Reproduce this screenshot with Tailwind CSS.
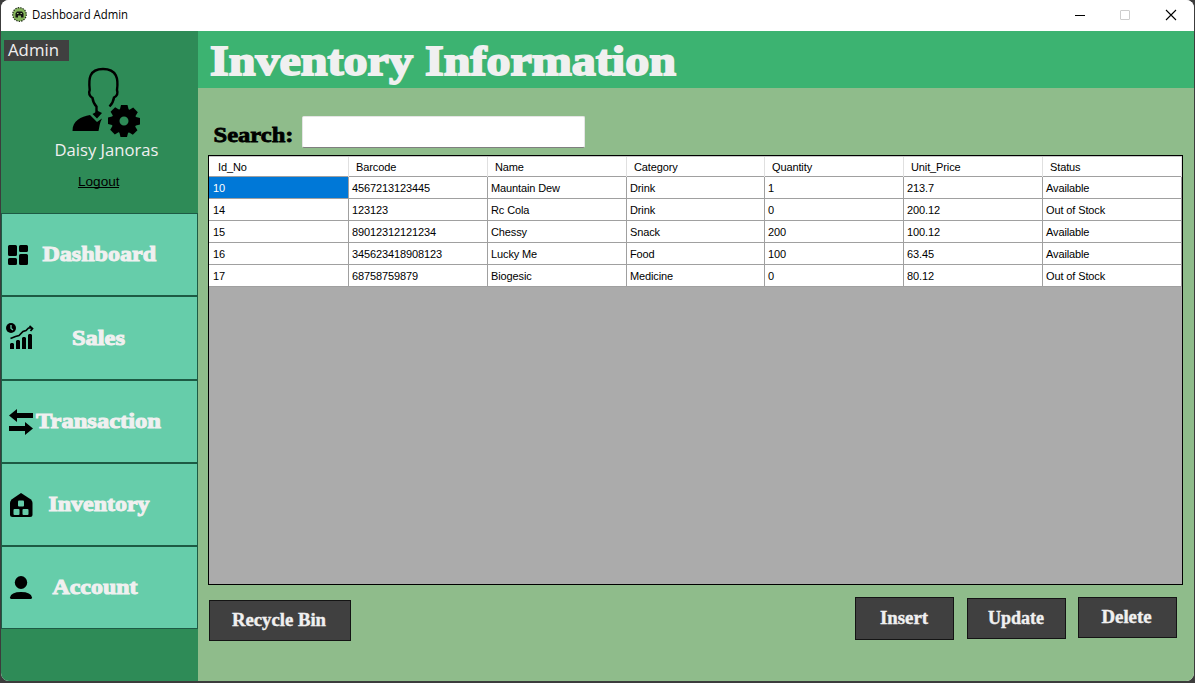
<!DOCTYPE html>
<html lang="en">
<head>
<meta charset="utf-8">
<title>Dashboard Admin</title>
<script src="https://cdn.jsdelivr.net/npm/@tailwindcss/browser@4"></script>
</head>
<body class="h-[683px] w-[1195px] overflow-hidden bg-[#3c3c3c] pr-px pb-[2px] pl-px font-['Liberation_Sans',sans-serif]">
<div class="flex h-[681px] w-[1193px] flex-col overflow-hidden rounded-lg bg-white">
  <header class="flex h-[31px] shrink-0 items-center bg-white pb-[2px] pl-[11px]">
    <svg class="mr-[5px] h-[15px] w-[15px]" viewBox="0 0 15 15"><circle cx="7.5" cy="7.5" r="6.8" fill="#86b45c" stroke="#1c2b14" stroke-width="1.2" stroke-dasharray="1.5 1"/><path d="M3.500 10.500V6.500L5 4.500H10L11.500 6.500V10.500H9V8.500H6V10.500Z" fill="#111"/><path d="M5 6.500h1.500M8.500 6.500h1.500" stroke="#9fc777"/></svg>
    <svg class="h-[20px] w-[100px]" viewBox="0 0 100 20"><text x="0" y="14" font-size="12" textLength="96" lengthAdjust="spacingAndGlyphs" class="font-['Open_Sans',sans-serif]">Dashboard Admin</text></svg>
    <div class="ml-auto flex items-center">
      <svg class="h-[14px] w-[12px]" viewBox="0 0 12 14"><path d="M1 7.5h10" stroke="#000"/></svg>
      <svg class="ml-[33px] h-[14px] w-[12px]" viewBox="0 0 12 14"><rect x="1.5" y="2.5" width="9" height="9" rx=".5" fill="none" stroke="#cdcdcd"/></svg>
      <svg class="mr-[17px] ml-[34px] h-[14px] w-[12px]" viewBox="0 0 12 14"><path d="M1 2l10 10M11 2L1 12" stroke="#000" stroke-width="1.1"/></svg>
    </div>
  </header>
  <div class="flex min-h-0 flex-1">
    <aside class="flex w-[197px] shrink-0 flex-col bg-[#2e8b57]">
      <section class="h-[182px] pt-[9px]">
        <div class="ml-[3px] h-[21px] w-[65px] bg-[#404040]"><svg class="h-[21px] w-[65px] overflow-visible" viewBox="0 0 65 21"><text x="4" y="16" font-size="16.500" textLength="51" lengthAdjust="spacingAndGlyphs" fill="#f0f0f0" class="font-['Open_Sans',sans-serif]">Admin</text></svg></div>
        <svg class="mt-[6px] ml-[70px] h-[72px] w-[72px]" viewBox="71 67 72 72">
          <path d="M109.500 106.500C112 104 113.500 101 114 97.500C117 96 118 93 117 90C118.500 79 117 69 103 69C89 69 88.500 79 89.700 90C88.500 93 89.500 96 92.500 98C93 102 94 104 96.500 106.500L96.500 113" fill="none" stroke="#000" stroke-width="2.400"/>
          <path d="M96 109l2 2 4 2-5 5.500-4.500-4.500 3.500-2zM72.500 131C72.500 120 81 117 90 115L97 122 102 118.500C99.500 123 99.500 127 98.500 131Z" fill="#000"/>
          <circle cx="124" cy="121" r="8.500" fill="none" stroke="#000" stroke-width="8"/>
          <g fill="#000"><path id="tooth" d="M119.500 111l1.500-6h6.500l1.500 6z"/><use href="#tooth" transform="rotate(45 124 121)"/><use href="#tooth" transform="rotate(90 124 121)"/><use href="#tooth" transform="rotate(135 124 121)"/><use href="#tooth" transform="rotate(180 124 121)"/><use href="#tooth" transform="rotate(225 124 121)"/><use href="#tooth" transform="rotate(270 124 121)"/><use href="#tooth" transform="rotate(315 124 121)"/></g>
        </svg>
        <svg class="ml-[53px] block h-[24px] w-[108px]" viewBox="54 139 108 24"><text x="54.500" y="156" font-size="16.500" textLength="104" lengthAdjust="spacingAndGlyphs" fill="#f0f0f0" class="font-['Open_Sans',sans-serif]">Daisy Janoras</text></svg>
        <svg class="mt-[9px] ml-[77px] block h-[18px] w-[42px]" viewBox="78 172 42 18"><text x="78" y="186" font-size="13.500" textLength="41.500" lengthAdjust="spacingAndGlyphs">Logout</text><path d="M78 187.500h41" stroke="#000"/></svg>
      </section>
      <nav class="flex flex-col font-['Liberation_Serif',serif] text-[21px] font-bold">
        <a class="h-[83px] border border-[#1d5a44] bg-[#66cdaa]"><svg class="h-[81px] w-[195px]" viewBox="2 214 195 81">
          <path d="M9.500 245h6q1.500 0 1.500 1.500v8q0 1.500-1.500 1.500h-6Q8 256 8 254.500v-8Q8 245 9.500 245zM20.500 245h6q1.500 0 1.500 1.500v4q0 1.500-1.500 1.500h-6q-1.500 0-1.500-1.500v-4q0-1.500 1.500-1.500zM9.500 258h6q1.500 0 1.500 1.500v4q0 1.500-1.500 1.500h-6Q8 265 8 263.500v-4Q8 258 9.500 258zM20.500 254h6q1.500 0 1.500 1.500v8q0 1.500-1.500 1.500h-6q-1.500 0-1.500-1.500v-8q0-1.500 1.500-1.500z"/>
          <text x="42.500" y="261" textLength="113.500" lengthAdjust="spacingAndGlyphs" fill="#f0f0f0" stroke="#f0f0f0" stroke-width="1">Dashboard</text></svg></a>
        <a class="h-[84px] border border-[#1d5a44] bg-[#66cdaa]"><svg class="h-[82px] w-[195px]" viewBox="2 297 195 82">
          <circle cx="11" cy="328" r="5"/><path d="M11 325v3.500l2 1.500" fill="none" stroke="#66cdaa" stroke-width="1.300"/><path d="M10.500 338.500l5-2 3.500-1 4-4 3-1 2.500-2.500h4M29.500 326l3 2.500-2 2.500" fill="none" stroke="#000" stroke-width="1.700"/><path d="M10 349v-5l1-1h2l1 1v5zM16 349v-8l1-1h2l1 1v8zM22 349v-11l1-1h2l1 1v11zM28 349v-14l1-1h2l1 1v14z"/>
          <text x="72" y="344.500" textLength="53" lengthAdjust="spacingAndGlyphs" fill="#f0f0f0" stroke="#f0f0f0" stroke-width="1">Sales</text></svg></a>
        <a class="h-[83px] border border-[#1d5a44] bg-[#66cdaa]"><svg class="h-[81px] w-[195px]" viewBox="2 381 195 81">
          <path d="M9 415.500l8-6.500v4h16v5H17v4zM33 428.500l-8-6.500v4H9v5h16v4z"/>
          <text x="36" y="428" textLength="125" lengthAdjust="spacingAndGlyphs" fill="#f0f0f0" stroke="#f0f0f0" stroke-width="1">Transaction</text></svg></a>
        <a class="h-[83px] border border-[#1d5a44] bg-[#66cdaa]"><svg class="h-[81px] w-[195px]" viewBox="2 464 195 81">
          <path d="M21 493l10 6.500q1.500 1.500 1.500 3.500v11.500q0 2.500-2.500 2.500H12.500q-2.500 0-2.500-2.500V503q0-2 1.500-3.500z"/><g fill="#66cdaa"><rect x="18" y="500.500" width="6" height="6" rx="1"/><rect x="13.500" y="509" width="6" height="6" rx="1"/><rect x="22.500" y="509" width="6" height="6" rx="1"/></g>
          <text x="48.500" y="511" textLength="101" lengthAdjust="spacingAndGlyphs" fill="#f0f0f0" stroke="#f0f0f0" stroke-width="1">Inventory</text></svg></a>
        <a class="h-[83px] border border-[#1d5a44] bg-[#66cdaa]"><svg class="h-[81px] w-[195px]" viewBox="2 547 195 81">
          <ellipse cx="21" cy="582.500" rx="6.200" ry="6.500"/><path d="M10 597.500Q11 592 21 592T32 597.500Q32 599 30.500 599H11.500Q10 599 10 597.500z"/>
          <text x="52.500" y="594" textLength="85" lengthAdjust="spacingAndGlyphs" fill="#f0f0f0" stroke="#f0f0f0" stroke-width="1">Account</text></svg></a>
      </nav>
    </aside>
    <main class="flex min-w-0 flex-1 flex-col bg-[#8fbc8b]">
      <h1 class="h-[57px] shrink-0 bg-[#3cb371] font-['Liberation_Serif',serif] text-[43px] font-bold"><svg class="h-[57px] w-[500px]" viewBox="198 31 500 57"><text x="210" y="75" textLength="466" lengthAdjust="spacingAndGlyphs" fill="#f0f0f0" stroke="#f0f0f0" stroke-width="1.800">Inventory Information</text></svg></h1>
      <div class="flex h-[67px] shrink-0 pt-[28px] pl-[15px]">
        <svg class="h-[32px] w-[89px] font-['Liberation_Serif',serif] text-[22px] font-bold" viewBox="213 116 89 32"><text x="213.500" y="142" textLength="80" lengthAdjust="spacingAndGlyphs" stroke="#000" stroke-width=".8">Search:</text></svg>
        <input aria-label="Search" class="h-[32px] w-[283px] rounded-[2px] border border-[#e5e5e5] border-b-[#7f7f7f] bg-white outline-none">
      </div>
      <div class="ml-[10px] h-[430px] w-[975px] shrink-0 border border-black bg-[#ababab] text-[11px] tracking-[-0.12px] text-black">
        <div class="grid h-[21px] grid-cols-[140px_139px_139px_138px_139px_139px_139px] border-t border-b border-[#a0a0a0] border-t-[#c8c8c8] bg-white leading-[20px] *:border-r *:border-[#e0e0e0] *:pl-[7px]">
          <div class="indent-[2px]">Id_No</div><div>Barcode</div><div>Name</div><div>Category</div><div>Quantity</div><div>Unit_Price</div><div>Status</div>
        </div>
        <div class="grid auto-rows-[22px] grid-cols-[140px_139px_139px_138px_139px_139px_139px] bg-white leading-[22px] *:border-r *:border-b *:border-[#a0a0a0] *:pl-[3px]">
          <div class="bg-[#0078d7] indent-px text-white">10</div><div>4567213123445</div><div>Mauntain Dew</div><div>Drink</div><div>1</div><div>213.7</div><div>Available</div>
          <div class="indent-px">14</div><div>123123</div><div>Rc Cola</div><div>Drink</div><div>0</div><div>200.12</div><div>Out of Stock</div>
          <div class="indent-px">15</div><div>89012312121234</div><div>Chessy</div><div>Snack</div><div>200</div><div>100.12</div><div>Available</div>
          <div class="indent-px">16</div><div>345623418908123</div><div>Lucky Me</div><div>Food</div><div>100</div><div>63.45</div><div>Available</div>
          <div class="indent-px">17</div><div>68758759879</div><div>Biogesic</div><div>Medicine</div><div>0</div><div>80.12</div><div>Out of Stock</div>
        </div>
      </div>
      <div class="flex items-start pt-[12px] pl-[11px] font-['Liberation_Serif',serif] text-[18px] font-bold">
        <button class="mt-[3px] h-[41px] w-[142px] border border-[#141414] bg-[#404040]"><svg class="h-[39px] w-[140px]" viewBox="210 601 140 39"><text x="232" y="626" textLength="94" lengthAdjust="spacingAndGlyphs" fill="#f0f0f0" stroke="#f0f0f0" stroke-width=".4">Recycle Bin</text></svg></button>
        <button class="ml-[504px] h-[43px] w-[99px] border border-[#141414] bg-[#404040]"><svg class="h-[41px] w-[97px]" viewBox="856 598 97 41"><text x="880" y="624" textLength="48" lengthAdjust="spacingAndGlyphs" fill="#f0f0f0" stroke="#f0f0f0" stroke-width=".4">Insert</text></svg></button>
        <button class="mt-px ml-[13px] h-[41px] w-[99px] border border-[#141414] bg-[#404040]"><svg class="h-[39px] w-[97px]" viewBox="968 599 97 39"><text x="988" y="624" textLength="56" lengthAdjust="spacingAndGlyphs" fill="#f0f0f0" stroke="#f0f0f0" stroke-width=".4">Update</text></svg></button>
        <button class="ml-[12px] h-[41px] w-[99px] border border-[#141414] bg-[#404040]"><svg class="h-[39px] w-[97px]" viewBox="1079 598 97 39"><text x="1101.500" y="623" textLength="50" lengthAdjust="spacingAndGlyphs" fill="#f0f0f0" stroke="#f0f0f0" stroke-width=".4">Delete</text></svg></button>
      </div>
    </main>
  </div>
</div>
</body>
</html>
